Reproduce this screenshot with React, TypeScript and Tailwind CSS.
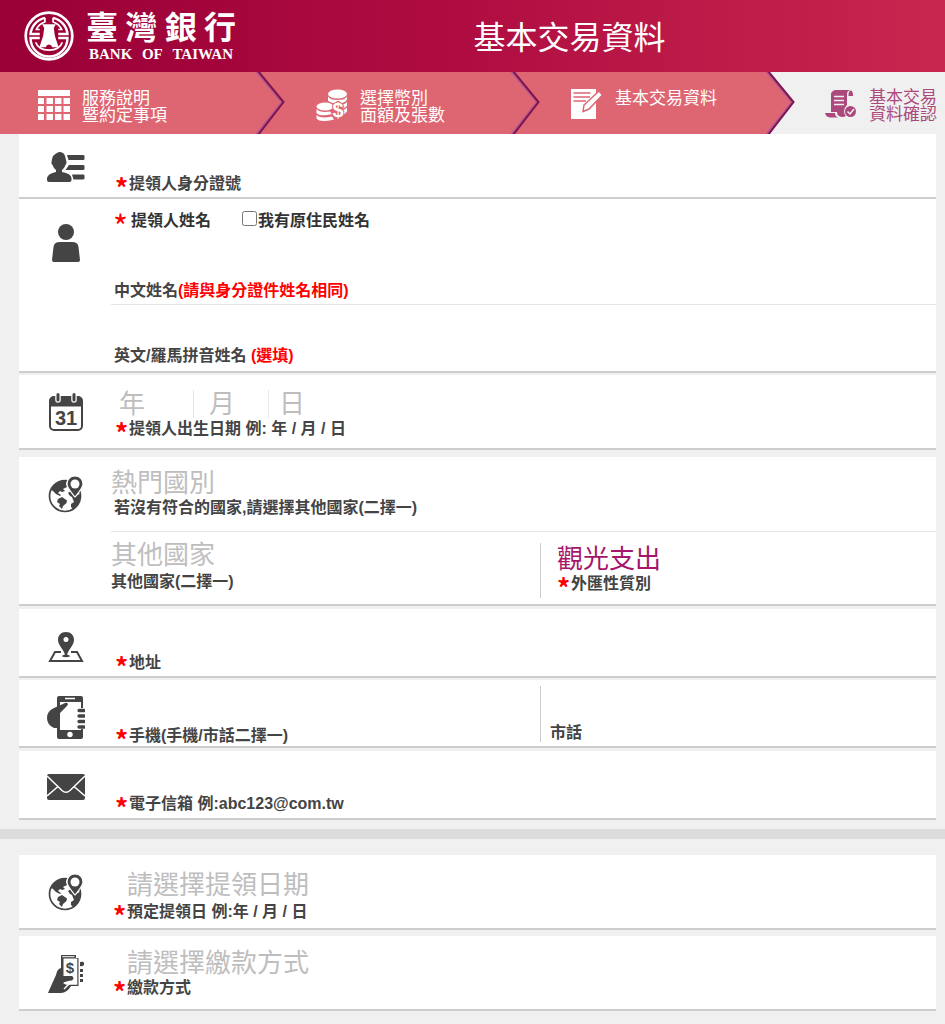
import { useState } from "react";
import type { ReactNode } from "react";
import clsx from "clsx";

const selectClass =
  "block h-7 w-full appearance-none bg-transparent p-0 text-[26px] leading-7 outline-none";

function Logo() {
  return (
    <a href="#" className="flex shrink-0 items-center gap-3 text-white">
      <svg viewBox="0 0 146 146" className="size-[50px]" fill="none" stroke="currentColor">
        <circle cx="73" cy="73" r="68" strokeWidth="8" />
        <path
          d="M61 20A54 54 0 0 0 19 67H46M85 20A54 54 0 0 1 127 67H100M46 79H19A54 54 0 0 0 127 79H100"
          strokeWidth="7"
        />
        <path
          d="M61 20V32Q43 38 36 54H46M85 20V32Q103 38 110 54H100M34 91Q42 114 73 114Q104 114 112 91"
          strokeWidth="5"
        />
        <path
          d="M53 39H93L87 50L90 72L101 106H83Q80 98 73 98Q66 98 63 106H45L56 72L59 50Z"
          fill="currentColor"
          stroke="none"
        />
      </svg>
      <div className="w-[150px]">
        <div className="flex justify-between text-[32px] leading-9 font-bold">
          <span>臺</span>
          <span>灣</span>
          <span>銀</span>
          <span>行</span>
        </div>
        <div className="flex justify-between px-[3px] font-['Liberation_Serif',serif] text-[15px] leading-4 font-bold">
          <span>BANK</span>
          <span>OF</span>
          <span>TAIWAN</span>
        </div>
      </div>
    </a>
  );
}

function TableIcon() {
  return (
    <svg viewBox="0 0 32 30" className="h-[30px] w-8" fill="currentColor">
      <path d="M0 0H32V6H0ZM0 8H6V14H0ZM8.500 8H15V14H8.500ZM17 8H23.500V14H17ZM25.500 8H32V14H25.500ZM0 16H6V22H0ZM8.500 16H15V22H8.500ZM17 16H23.500V22H17ZM25.500 16H32V22H25.500ZM0 24H6V30H0ZM8.500 24H15V30H8.500ZM17 24H23.500V30H17ZM25.500 24H32V30H25.500Z" />
    </svg>
  );
}

function CoinsIcon() {
  return (
    <svg viewBox="0 0 32 36" className="h-9 w-8" fill="currentColor">
      <ellipse cx="21.500" cy="5" rx="9.500" ry="4.500" />
      <path d="M12 7.500Q14 11 21.500 11T31 7.500V10.500Q29 14.500 21.500 14.500Q16 14.500 12 12Z" />
      <path d="M25 16Q29 15.500 31 13V16.500Q30 18.500 27 19.500Z" />
      <path d="M26 21.500Q29.500 20.500 31 18.500V22.500Q29.500 25 26 25.500Z" />
      <ellipse cx="9" cy="17.500" rx="8.500" ry="4" />
      <path d="M0.500 20Q4 24 14 22.500L16 25Q4 28 0.500 24Z" />
      <path d="M0.500 26Q4 30 16 27.500L18 30.500Q4 34 0.500 29.500Z" />
      <text
        x="22"
        y="28"
        fontSize="20"
        fontWeight="700"
        textAnchor="middle"
        fontFamily="Liberation Sans, sans-serif"
        stroke="#de6673"
        strokeWidth="2"
        paintOrder="stroke"
      >
        $
      </text>
    </svg>
  );
}

function NoteIcon() {
  return (
    <svg viewBox="0 0 32 32" className="size-8">
      <path d="M0 1H25V31H0Z" fill="#fff" />
      <path d="M2.500 5H19.500M2.500 9H19M2.500 13H15" stroke="#de6673" strokeWidth="1.500" />
      <path d="M28 3L31.500 7L18 21L12 23.500L13 17Z" fill="#fff" stroke="#de6673" strokeWidth="1.500" />
    </svg>
  );
}

function ScrollIcon() {
  return (
    <svg viewBox="0 0 32 30" className="h-[30px] w-8" fill="currentColor">
      <path d="M8 2Q9 1 11 1H25Q22 2 22 5V16Q19 19 19 22Q19 25 21 27Q17 29 14 27Q12 26 12 23H6V5Q6 3 8 2Z" />
      <path d="M23.500 6Q23.500 1.500 26 1.500Q28 2 28 7H23.500Z" />
      <path d="M0 24H10Q10 27 13 28.500H5Q1 28 0 24Z" />
      <path d="M9 7.500H19M9 11.500H19M9 15.500H19" stroke="#f0f0f0" strokeWidth="1.300" />
      <circle cx="25.500" cy="22.500" r="5.500" />
      <path d="M22.500 22.500L25 25L29 20" fill="none" stroke="#f0f0f0" strokeWidth="1.500" />
    </svg>
  );
}

function Chevron({ last = false }: { last?: boolean }) {
  return (
    <svg
      viewBox="0 0 30 62"
      preserveAspectRatio="none"
      className={clsx("h-[62px] w-[30px] shrink-0", last ? "bg-[#f0f0f0]" : "bg-[#de6673]")}
    >
      <path d="M0 0H3L28 30L3 62H0Z" fill="#de6673" />
      <path d="M1 -1L27 30L1 63" fill="none" stroke="#b0578f" strokeWidth="2" />
      <path d="M3 -1L28.500 30L3 63" fill="none" stroke="#7f1350" strokeWidth="2" />
    </svg>
  );
}

function IdIcon() {
  return (
    <svg viewBox="0 0 38 30" className="h-[30px] w-[38px]" fill="currentColor">
      <path d="M12 0C16 0 18 2 18.500 6Q19 8 19.500 10Q19.500 12 18.500 13Q17.500 16 15 18V20Q24 21.500 24.500 26V28Q24.500 30 22.500 30H2Q0 30 0 28V26Q1 21.500 9 20V18Q6.500 16 5.500 13Q4 12 4.500 10Q5 2 12 0Z" />
      <path d="M20 3H36Q37.500 3 37.500 4V7Q37.500 8 36 8H21.500ZM22 13H36Q37.500 13 37.500 14V17Q37.500 18 36 18H18.500ZM25 22.500H36Q37.500 22.500 37.500 23.500V26.500Q37.500 27.500 36 27.500H26.500Z" />
    </svg>
  );
}

function PersonIcon() {
  return (
    <svg viewBox="0 0 28 38" className="h-[38px] w-7" fill="currentColor">
      <circle cx="14" cy="8" r="8" />
      <path d="M8 18H20Q26 18 26.500 23L28 36Q28 38 26 38H2Q0 38 0 36L1.500 23Q2 18 8 18Z" />
    </svg>
  );
}

function CalendarIcon() {
  return (
    <svg viewBox="0 0 34 38" className="h-[38px] w-[34px]" fill="none" stroke="currentColor">
      <rect x="1" y="4" width="32" height="33" rx="4" strokeWidth="2" />
      <path d="M1 13V7Q1 4 5 4H29Q33 4 33 7V13Z" fill="currentColor" />
      <path d="M9 2V7M25 2V7" stroke="#fff" strokeWidth="5.500" strokeLinecap="round" />
      <path d="M9 1.500V7M25 1.500V7" strokeWidth="3" strokeLinecap="round" />
      <text
        x="17"
        y="32"
        fontSize="20"
        fontWeight="700"
        textAnchor="middle"
        fontFamily="Liberation Sans, sans-serif"
        fill="currentColor"
        stroke="none"
      >
        31
      </text>
    </svg>
  );
}

function GlobeIcon() {
  return (
    <svg viewBox="0 0 36 38" className="h-[38px] w-9">
      <circle cx="17" cy="21" r="15.500" fill="none" stroke="currentColor" strokeWidth="1.700" />
      <path
        d="M3 15Q7 5 19 5.500L18 9L19 12L15 14L17 16L14 17L12 16L10 18L13 20L12 21L8 19L5 16ZM10 24L14 22L19 25.500L18.500 28L15 31L14 34L11 31L12 29L9 27ZM20 18L23 16L27 21L32 19Q33 29 25 34L23 32V29L26 27L24 22L22 21Z"
        fill="currentColor"
      />
      <path
        d="M27 1C32 1 35 4.500 35 9C35 13 31 17 27 22C23 17 19 13 19 9C19 4.500 22 1 27 1Z"
        fill="currentColor"
        stroke="#fff"
        strokeWidth="1.200"
      />
      <circle cx="27" cy="9" r="4.500" fill="#fff" />
    </svg>
  );
}

function MapPinIcon() {
  return (
    <svg viewBox="0 0 36 31" className="h-[31px] w-9" fill="none" stroke="currentColor">
      <path d="M13 20H7L2 29H34L29 20H23" strokeWidth="2" />
      <path
        d="M18 0C23 0 26 3.500 26 8C26 13 21 17 19 22.500Q22 23 22 24.500Q18 26 14 24.500Q14 23 17 22.500C15 17 10 13 10 8C10 3.500 13 0 18 0Z"
        fill="currentColor"
        stroke="none"
      />
      <circle cx="18" cy="7.500" r="2.500" fill="#fff" stroke="none" />
    </svg>
  );
}

function PhoneIcon() {
  return (
    <svg viewBox="0 0 38 43" className="h-[43px] w-[38px]" fill="currentColor">
      <rect x="10" y="0" width="26" height="43" rx="2" />
      <path d="M13 6H34V34H13Z" fill="#fff" />
      <path d="M18 2.500H28" stroke="#fff" strokeWidth="1.500" />
      <circle cx="23" cy="38.500" r="2.700" fill="#fff" />
      <path d="M18 7Q20 6 21 8Q21 9 19 11L13 17V32H7Q0 29 0 22Q0 15 7 12Z" />
      <path d="M31 12H38V33H31Z" fill="#fff" />
      <path d="M32 14.500H37M32 20H37M32 25.500H37M32 31H37" stroke="currentColor" strokeWidth="3.300" strokeLinecap="round" />
    </svg>
  );
}

function MailIcon() {
  return (
    <svg viewBox="0 0 38 26" className="h-[26px] w-[38px]">
      <rect width="38" height="26" rx="2" fill="currentColor" />
      <path
        d="M0 2L15 16.500Q19 20 23 16.500L38 2M0 22L11 12.500M38 22L27 12.500"
        fill="none"
        stroke="#fff"
        strokeWidth="1.500"
      />
    </svg>
  );
}

function PayIcon() {
  return (
    <svg viewBox="0 0 36 38" className="h-[38px] w-9" fill="currentColor">
      <path d="M13 13V0H28V3H30.500V31H23Q19 38 13 38H0Q3 31 8 20Q9 14 13 13Z" />
      <path d="M14.200 1.200H26.500V2.200H14.200Z" fill="#fff" />
      <path d="M15.500 3.500H29.300V29.800H18L15 28Q18 26 24 25.500Q27 23 24 21H15.500Z" fill="#fff" />
      <path d="M22 28L16 34" stroke="#fff" strokeWidth="1.500" />
      <path d="M32 7Q36 6 36 8V10Q34 12 32 11ZM32 14H35V17H32ZM32 19H35V22H32ZM32 24H35V27H32Z" />
      <text x="22" y="18" fontSize="15" fontWeight="700" textAnchor="middle" fontFamily="Liberation Sans, sans-serif">
        $
      </text>
    </svg>
  );
}

interface ICard {
  icon: ReactNode;
  iconClass: string;
  className?: string;
  children: ReactNode;
}

function Card({ icon, iconClass, className, children }: ICard) {
  return (
    <section className={clsx("flex border-b-2 border-[#cdcdcd] bg-white", className)}>
      <div className={clsx("flex w-[92px] shrink-0 items-start justify-center pl-[2px]", iconClass)}>{icon}</div>
      <div className="min-w-0 flex-1">{children}</div>
    </section>
  );
}

interface ICaption {
  htmlFor: string;
  required?: boolean;
  className?: string;
  children: ReactNode;
}

function Caption({ htmlFor, required, className, children }: ICaption) {
  return (
    <label htmlFor={htmlFor} className={clsx("flex h-5 items-start text-base leading-[22px] font-bold", className)}>
      {required && (
        <span className="w-4 shrink-0 pl-[2px] font-['Noto_Sans_CJK_TC',sans-serif] text-[26px] leading-7 text-[#f00]">
          *
        </span>
      )}
      <span>{children}</span>
    </label>
  );
}

function TextInput({ id, className, type = "text" }: { id: string; className?: string; type?: string }) {
  return (
    <input
      id={id}
      type={type}
      className={clsx("block h-9 w-full bg-transparent pl-2 text-[26px] text-[#a5166b] outline-none", className)}
    />
  );
}

interface IPicker {
  id: string;
  options: string[];
  className?: string;
}

function Picker({ id, options, className = "text-[#bebebe]" }: IPicker) {
  const [value, setValue] = useState(options[0]);

  return (
    <select
      id={id}
      value={value}
      onChange={(e) => setValue(e.target.value)}
      className={clsx(selectClass, className)}
    >
      {options.map((option) => (
        <option key={option}>{option}</option>
      ))}
    </select>
  );
}

function App() {
  const [native, setNative] = useState(false);

  return (
    <div className="min-h-screen bg-[#f0f0f0] pb-[13px] font-['Liberation_Sans','Noto_Sans_CJK_TC',sans-serif] text-[#444]">
      <header className="flex h-[72px] items-center bg-linear-to-r from-[#990036] via-[#b00d42] to-[#c9264f] pl-6 text-white">
        <Logo />
        <h1 className="flex-1 pt-1 pr-[42px] text-center text-[32px] leading-10">基本交易資料</h1>
      </header>

      <nav className="overflow-hidden text-[17px] leading-[17px] whitespace-nowrap text-white">
        <ol className="flex">
          <li className="flex w-[285px] shrink-0 justify-between bg-[#de6673]">
            <div className="flex gap-3 pt-[18px] pl-[38px]">
              <TableIcon />
              <p>
                服務說明
                <br />
                暨約定事項
              </p>
            </div>
            <Chevron />
          </li>
          <li className="flex w-[255px] shrink-0 justify-between bg-[#de6673]">
            <div className="flex gap-3 pt-[17px] pl-[31px]">
              <CoinsIcon />
              <p className="pt-px">
                選擇幣別
                <br />
                面額及張數
              </p>
            </div>
            <Chevron />
          </li>
          <li className="flex w-[255px] shrink-0 justify-between bg-[#de6673]">
            <div className="flex gap-3 pt-4 pl-[31px]">
              <NoteIcon />
              <p className="pt-[2px]">基本交易資料</p>
            </div>
            <Chevron last />
          </li>
          <li className="flex flex-1 gap-3 pt-[17px] pl-[30px] text-[#ab497c]">
            <ScrollIcon />
            <p>
              基本交易
              <br />
              資料確認
            </p>
          </li>
        </ol>
      </nav>

      <form>
        <div className="mr-[9px] ml-[19px]">
          <Card icon={<IdIcon />} iconClass="pt-[18px]">
            <div className="pt-[3px] pb-1 pl-[2px]">
              <TextInput id="idNumber" />
              <Caption htmlFor="idNumber" required>
                提領人身分證號
              </Caption>
            </div>
          </Card>

          <Card icon={<PersonIcon />} iconClass="pt-[25px]">
            <div className="border-b border-[#e6e6e6] pt-3 pb-1">
              <div className="flex h-5 items-center text-base leading-5 font-bold text-[#333]">
                <span className="h-5 w-5 pl-[2px] font-['Noto_Sans_CJK_TC',sans-serif] text-[32px] leading-7 font-normal text-[#f00]">
                  *
                </span>
                <span className="w-[111px]">提領人姓名</span>
                <input
                  id="native"
                  type="checkbox"
                  checked={native}
                  onChange={(e) => setNative(e.target.checked)}
                  className="mb-[6px] size-[15px]"
                />
                <label htmlFor="native" className="pl-px">
                  我有原住民姓名
                </label>
              </div>
              <TextInput id="chineseName" className="mt-[13px]" />
              <Caption htmlFor="chineseName" className="pl-[3px]">
                中文姓名<span className="text-[#f00]">(請與身分證件姓名相同)</span>
              </Caption>
            </div>
            <div className="pt-1 pb-[6px]">
              <TextInput id="englishName" />
              <Caption htmlFor="englishName" className="pl-[3px]">
                英文/羅馬拼音姓名 <span className="text-[#f00]">(選填)</span>
              </Caption>
            </div>
          </Card>

          <Card icon={<CalendarIcon />} iconClass="pt-[18px]" className="mt-[2px]">
            <div className="pt-[15px] pb-[10px]">
              <div className="flex">
                <div className="w-[83px] border-r border-[#e6e6e6] pl-2">
                  <Picker id="year" options={["年"]} />
                </div>
                <div className="w-[75px] border-r border-[#e6e6e6] pl-[15px]">
                  <Picker id="month" options={["月"]} />
                </div>
                <div className="w-[75px] pl-[10px]">
                  <Picker id="day" options={["日"]} />
                </div>
              </div>
              <Caption htmlFor="year" required className="pl-[2px]">
                提領人出生日期 例: 年 / 月 / 日
              </Caption>
            </div>
          </Card>

          <Card icon={<GlobeIcon />} iconClass="pt-[18px]" className="mt-[7px]">
            <div className="border-b border-[#e6e6e6] pt-3 pb-[14px]">
              <Picker id="hotCountry" options={["熱門國別"]} />
              <Caption htmlFor="hotCountry" className="pl-[3px]">
                若沒有符合的國家,請選擇其他國家(二擇一)
              </Caption>
            </div>
            <div className="grid grid-cols-[52%_48%]">
              <div className="pt-[9px]">
                <Picker id="otherCountry" options={["其他國家"]} />
                <Caption htmlFor="otherCountry" className="mt-[2px]">
                  其他國家(二擇一)
                </Caption>
              </div>
              <div className="mt-[11px] mb-[6px] border-l border-[#ccc] pt-[2px] pb-[5px] pl-4">
                <Picker id="purpose" options={["觀光支出"]} className="text-[#a5166b]" />
                <Caption htmlFor="purpose" required className="-ml-[2px]">
                  外匯性質別
                </Caption>
              </div>
            </div>
          </Card>

          <Card icon={<MapPinIcon />} iconClass="pt-[23px]" className="mt-[3px]">
            <div className="pt-[7px] pb-1 pl-[2px]">
              <TextInput id="address" />
              <Caption htmlFor="address" required>
                地址
              </Caption>
            </div>
          </Card>

          <Card icon={<PhoneIcon />} iconClass="pt-4" className="mt-[2px]">
            <div className="grid grid-cols-[52%_48%]">
              <div className="pt-[9px] pb-px pl-[2px]">
                <TextInput id="mobile" />
                <Caption htmlFor="mobile" required>
                  手機(手機/市話二擇一)
                </Caption>
              </div>
              <div className="mt-[6px] mb-1 border-l border-[#ccc] pl-[9px]">
                <TextInput id="phone" />
                <Caption htmlFor="phone">市話</Caption>
              </div>
            </div>
          </Card>

          <Card icon={<MailIcon />} iconClass="pt-[23px]" className="mt-[3px]">
            <div className="pt-[6px] pb-[5px] pl-[2px]">
              <TextInput id="email" type="email" />
              <Caption htmlFor="email" required>
                電子信箱 例:abc123@com.tw
              </Caption>
            </div>
          </Card>
        </div>

        <hr className="mt-[9px] mb-4 h-[10px] border-0 bg-[#dcdcdc]" />

        <div className="mr-[9px] ml-[19px]">
          <Card icon={<GlobeIcon />} iconClass="pt-[18px]">
            <div className="pt-4 pb-[7px]">
              <div className="pl-4">
                <Picker id="pickupDate" options={["請選擇提領日期"]} />
              </div>
              <Caption htmlFor="pickupDate" required className="mt-[2px]">
                預定提領日 例:年 / 月 / 日
              </Caption>
            </div>
          </Card>

          <Card icon={<PayIcon />} iconClass="pt-[19px]" className="mt-[6px]">
            <div className="pt-[13px] pb-3">
              <div className="pl-4">
                <Picker id="payment" options={["請選擇繳款方式"]} />
              </div>
              <Caption htmlFor="payment" required>
                繳款方式
              </Caption>
            </div>
          </Card>
        </div>
      </form>
    </div>
  );
}

export default App;
